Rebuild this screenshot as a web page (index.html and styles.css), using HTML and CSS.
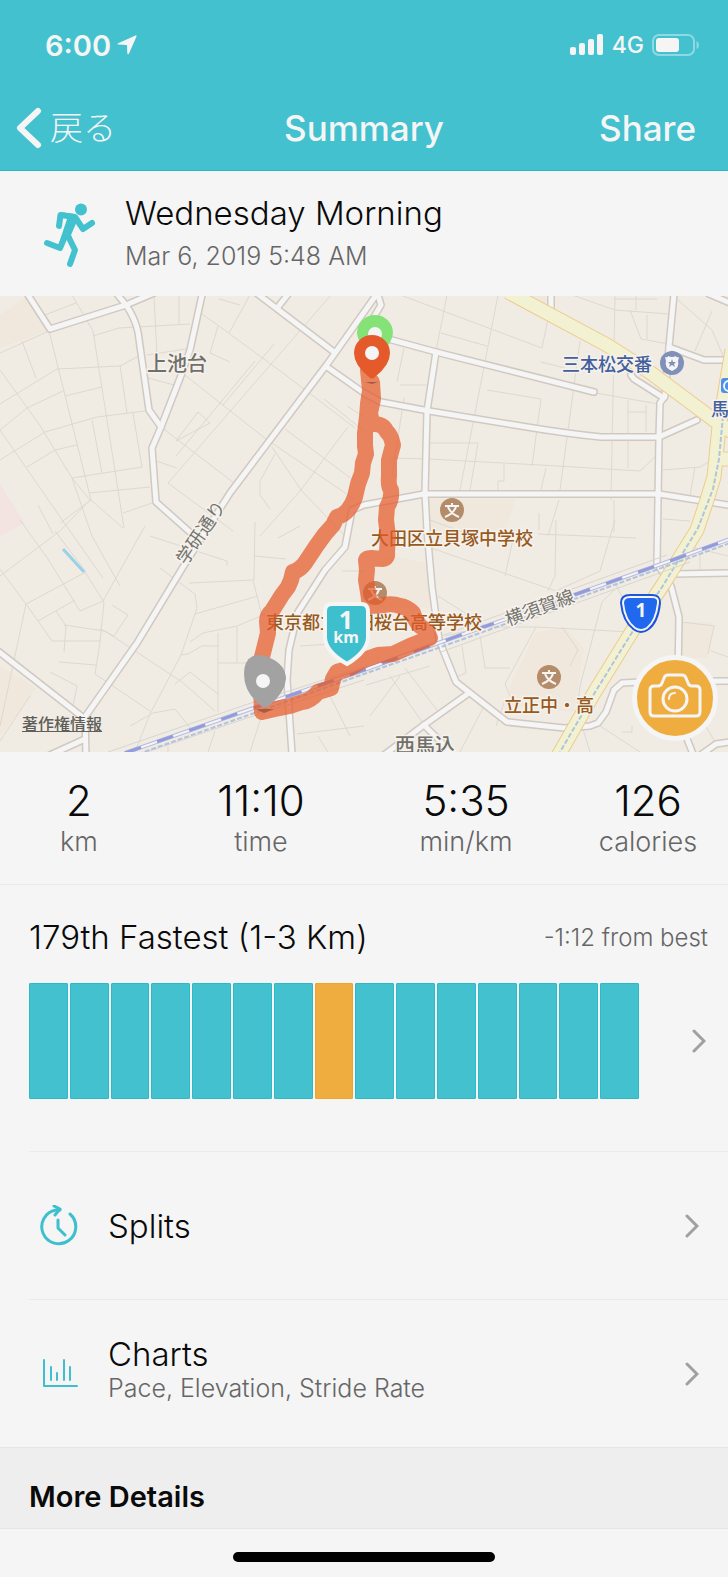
FILE: index.html
```html
<!doctype html>
<html lang="en">
<head>
  <meta charset="UTF-8">
  <meta name="viewport" content="width=device-width, initial-scale=1.0">
  <title>Summary</title>
  <link rel="stylesheet" href="styles.css">
</head>
<body>
  <header class="header">
    <div class="status">
      <span class="clock">6:00</span>
      <svg class="location" width="20" height="20" viewBox="0 0 20 20"><path d="M18.500 0.500 Q20 0 19.500 1.500 L12 18.500 Q11 20 10.300 18.500 L10 10.500 Q10 10 9.500 10 L1.200 9.600 Q-0.500 9 1.200 8.200 Z"/></svg>
      <svg class="signal" width="34" height="22" viewBox="0 0 34 22"><rect y="13" width="6" height="8" rx="2"/><rect x="9" y="9" width="6" height="12" rx="2"/><rect x="18" y="5" width="6" height="16" rx="2"/><rect x="27" y="0" width="6" height="21" rx="2"/></svg>
      <span class="network">4G</span>
      <svg class="battery" width="48" height="22" viewBox="0 0 48 22"><rect class="shell" x="1" y="1" width="41" height="20" rx="6"/><rect x="4" y="4" width="23" height="14" rx="3"/><path class="nub" d="M44.500 7 Q47 8 47 11 T44.500 15 Z"/></svg>
    </div>
    <nav class="nav">
      <a class="back" href="#">
        <svg width="26" height="42" viewBox="0 0 26 42"><path d="M22 4 L4 21 L22 38"/></svg>
        <span>戻る</span>
      </a>
      <h1>Summary</h1>
      <button class="share" type="button">Share</button>
    </nav>
  </header>

  <main>
    <section class="activity">
      <svg class="runner" width="52" height="68" viewBox="0 0 52 68">
        <circle cx="37" cy="9.500" r="6"/>
        <path d="M16 12 L30 14 L34 19 L27 35 L30 44 L20 36 L17 47 L14 46 L23 19 Z"/>
        <path class="limb" d="M15 26 L16.500 15 L31 17 L39 29 L48 23"/>
        <path class="limb" d="M28 20 L16 48 L3 43"/>
        <path class="limb" d="M23 34 L31 50 L26 64"/>
      </svg>
      <div>
        <h2>Wednesday Morning</h2>
        <p>Mar 6, 2019 5:48 AM</p>
      </div>
    </section>

    <section class="map">
      <svg class="map-view" viewBox="0 0 728 456">
        <defs>
          <g id="roads">
            <path d="M28 -1 L50 33 L126 9 L154 -3"/>
            <path d="M117 -2 L126 9 Q135 22 138 36 L149 114 L161 131"/>
            <path d="M202 -1 L190 54 L182 77 L161 131 L152 152 L156 206 L192 238"/>
            <path d="M379 -5 L328 67 L230 197 L183 271 L137 347 L85 421 L86 460"/>
            <path d="M85 443 L50 459"/>
            <path d="M378 -1 L381 9 L371 26"/>
            <path d="M255 -4 L334 56"/>
            <path d="M289 -3 L278 11"/>
            <path d="M327 71 L364 97 L381 106 L429 115 L527 131 Q570 138 601 141 H659 L697 124"/>
            <path d="M364 36 L392 44 L436 56 L594 96"/>
            <path d="M436 56 L427 115 L425 197 L427 234 L432 291 L439 344 L456 386 L507 426 L564 432 L590 430 L598 427 L606 416 L614 394 L622 387 L641 386 L732 385"/>
            <path d="M469 397 L424 429 L384 459"/>
            <path d="M424 429 L453 458"/>
            <path d="M292 458 L287 384 L289 354 L298 316 L325 274 L345 251 L352 214 L364 209 L424 198 H659 L728 209"/>
            <path d="M674 -2 L669 51 L665 100 L660 107 L659 141 L657 267 L671 290 L679 321 L678 380 L680 425 L693 458"/>
            <path d="M669 51 L704 64 H726"/>
            <path d="M709 -2 L730 7"/>
            <path d="M551 -2 V17"/>
            <path d="M631 79 L634 83 L664 102"/>
            <path d="M674 278 L730 277"/>
            <path d="M702 458 L716 448 L730 446"/>
            <path d="M-2 355 L85 423"/>
          </g>
          <g id="highways">
            <path d="M508 -4 L607 49 L651 77 L714 124 L732 136"/>
            <path d="M732 54 L719 131 L714 181 L707 204 L697 234 L664 287 L631 337 L594 397 L558 460"/>
            <path d="M719 163 H732"/>
          </g>
          <g id="school">
            <circle r="12"/>
            <path d="M0 -7 V-4 M-7 -4 H7 M-4 -3 Q-1 4 7 7 M4 -3 Q1 4 -7 7"/>
          </g>
        </defs>

        <rect class="land" width="728" height="456"/>
        <g class="zone">
          <path d="M0 19 L26 1 L50 34 L0 52 Z"/>
          <path d="M0 370 L36 392 L12 425 L0 440 Z"/>
          <path d="M429 203 H515 L506 235 H432 Z"/>
          <path d="M392 260 L432 268 L434 312 H375 V270 Z"/>
          <path d="M505 410 L510 390 L535 337 L565 331 L584 352 L574 416 Z"/>
          <path d="M682 326 H713 L708 362 H682 Z"/>
          <path d="M527 0 H546 V15 Z"/>
        </g>
        <path class="zone-pink" d="M0 188 L25 227 L0 240 Z"/>
        <path class="zone-blue" d="M725 65 H728 V127 H718 Z"/>

        <g class="lanes">
          <path d="M0 57 L49 35 L91 204 L123 232 M0 74 L39 128 L72 182 L92 240 L120 290 M0 108 L57 73 L120 70 L137 61 M22 45 L36 82 M0 134 L27 112 L63 95 M65 100 L102 91 M0 164 L45 136 L97 121 L145 115"/>
          <path d="M72 -1 L93 35 L124 232 M93 40 L119 32 L190 28 M45 19 L76 7 M120 69 L127 117 M133 117 L142 171 L72 182 M92 124 L102 177 M27 171 L55 154 L77 149 M89 197 L150 191 M154 0 L157 60 M179 0 V28 M147 59 L186 53 M148 82 L174 89 M0 134 L65 228 L103 282"/>
          <path d="M72 182 L90 204 L60 235 L0 280 M91 204 L60 227 M123 217 L155 206 M38 209 L53 238 M202 18 L219 30 L283 77 L355 132 M219 3 L240 9 M250 -1 L229 37 M218 30 L210 57 L230 66 M274 48 L223 109 M255 65 L176 160 M186 80 L266 143 L354 203 M331 -1 L168 187 L233 235 M161 131 L234 187"/>
          <path d="M210 127 L176 145 L198 116 L210 127 M285 133 L353 184 M348 131 L335 148 L301 194 L260 240 M272 151 L301 194 L345 240 M275 158 L260 185 V199 L270 213 M156 165 L177 172 M324 103 L364 135 M347 110 L364 121"/>
          <path d="M20 224 L48 263 L80 315 L103 305 L145 230 M0 273 L26 308 L52 345 H100 M26 308 L86 276 L55 235 M85 276 L104 306 L100 346 L95 378 L150 415 M38 325 L75 304 M56 315 L66 330 L64 356 M64 329 L105 335 L182 386 L215 415 M59 366 L96 369 M112 309 L128 319 L114 340 L100 333 M50 376 L77 390 L72 415 M0 430 L26 308"/>
          <path d="M160 272 L195 298 L197 312 L181 359 L150 418 L135 456 M195 318 L258 300 M189 287 L253 284 L262 320 M227 265 V270 M150 240 L227 265 M254 284 L255 226 M255 260 L286 263 M278 242 L300 230 M181 359 L188 358 L202 350 H218 M190 346 L203 337 L237 330 L266 318 M218 337 V416 M237 331 V367 M218 367 H265 M175 388 L190 376 L218 398 M130 430 L153 417 L175 413 L192 434 M215 435 L208 456 M168 450 V456 M300 350 L330 348 M342 275 H364"/>
          <path d="M265 409 L250 456 M297 438 L364 430 M318 440 L328 456 M330 400 L350 440 M0 445 L30 400"/>
          <path d="M403 0 L542 52 M447 -1 L436 55 M498 -1 L460 194 M542 52 L553 -1 M441 37 L487 50 M541 66 L565 72 M580 45 L560 194 M615 0 L611 204 M400 89 H427 M404 52 L397 86 M487 94 L541 103 L532 170 M404 102 L392 180 M429 147 H478 M478 147 L470 194 M390 162 L429 163 L540 169 L640 175 L656 160 M504 168 V185 H498 V194 M546 172 L541 194 M572 -1 L615 14 L669 18 M636 0 V14 M614 3 H657 M630 14 L641 43 L669 48 M647 19 V43 M628 104 V172 M628 116 H647 M646 109 V136 M596 97 L664 109"/>
          <path d="M678 4 L712 34 L724 62 M712 15 L695 55 M663 174 L700 171 L710 165 M695 171 L690 200 M663 223 L690 225 M614 204 V236 M559 204 L548 240 M539 217 V234 M430 224 L468 238"/>
          <path d="M431 252 L556 295 M556 224 L555 280 L548 295 M515 234 L505 280 M538 238 L636 242 M615 224 L600 275 L556 295 M438 300 L486 330 M445 340 L483 331 L536 331 L631 336 M480 340 L485 372 H510 M462 350 L466 377 L450 384 M614 285 L629 315 M615 293 L602 306 L580 390 L577 414 M536 331 L505 388 L510 400 M562 331 L578 354 L570 370 M484 410 L460 456 M505 404 L496 430 M390 380 L432 440 M366 389 L430 370 M405 372 L440 418 M370 420 L400 380 M600 430 L640 456 M622 436 H632 V430 M582 430 L590 456"/>
          <path d="M681 326 L715 330 M714 330 L708 358 M711 355 L728 361 M687 250 L728 260 M700 260 V277 M700 385 V420 L715 446"/>
        </g>

        <path class="stream" d="M63 253 L84 276"/>
        <use href="#roads" class="road-edge"/>
        <use href="#roads" class="road-fill"/>
        <use href="#highways" class="highway-edge"/>
        <use href="#highways" class="highway-fill"/>
        <path class="subway" d="M723 120 L719 163 L713 193 L698 232 L664 288 L631 338 L594 398 L560 456"/>

        <path class="rail-side" d="M108 456 L245 409 L364 371 M135 460 L250 421 L364 384 M441 340 L667 259 M441 356 L690 266"/>
        <path class="rail-edge" d="M125 457 L245 415 L364 374 L441 346 L667 266 L730 243"/>
        <path class="rail-fill" d="M125 457 L245 415 L364 374 L441 346 L667 266 L730 243"/>
        <path class="rail-dash" d="M125 457 L245 415 L364 374 L441 346 L667 266 L730 243"/>
        <path class="subway" d="M138 458 L246 420 L364 378 L441 351 L667 270 L730 247"/>

        <use href="#school" class="school" x="452" y="214"/>
        <use href="#school" class="school" x="375" y="297"/>
        <use href="#school" class="school" x="549" y="381"/>

        <g class="label-school">
          <text x="371" y="249">大田区立貝塚中学校</text>
          <text x="266" y="333">東京都立大田桜台高等学校</text>
          <text x="504" y="416">立正中・高</text>
        </g>
        <g class="label-area">
          <text x="147" y="75">上池台</text>
          <text x="395" y="457">西馬込</text>
        </g>
        <g class="label-blue">
          <text x="562" y="75">三本松交番</text>
          <text x="711" y="120">馬</text>
        </g>
        <g class="label-road">
          <text transform="translate(186 270) rotate(-56)">学研通り</text>
          <text transform="translate(508 330) rotate(-20)">横須賀線</text>
        </g>

        <circle class="police" cx="672" cy="67" r="12"/>
        <path class="police-badge" d="M665 61 Q668 62 668 60 Q672 62 676 60 Q676 62 679 61 L678 65 Q680 72 672 75 Q664 72 666 65 Z"/>
        <path class="police" d="M672 63 L673 66 H676 L674 68 L675 71 L672 69 L669 71 L670 68 L668 66 H671 Z"/>
        <rect class="station" x="721" y="82" width="14" height="15" rx="3"/>
        <circle class="station-ring" cx="729" cy="90" r="5"/>

        <path class="route-edge" d="M630 298 H652 Q661 298 661 307 Q659 327 649 334 Q641 340 633 334 Q622 326 620 307 Q620 298 630 298 Z"/>
        <path class="route-line" d="M630 301 H652 Q659 301 658 307 Q656 325 647 332 Q641 336 635 332 Q625 325 623 307 Q623 301 630 301 Z"/>
        <text class="route-number" x="641" y="321">1</text>

        <path class="track" d="M368 74 L370 94 L368 108 L367 121 L366 129 L365 137 L365 150 L366 158 L363 167 L362 177 L358 188 L355 201 L352 208 L348 214 Q344 219 337 221 L333 229 L325 238 L317 249 L311 258 L305 267 Q300 274 293 276 L291 284 L288 291 L282 299 L277 307 L272 315 Q267 319 267 325 L268 337 L265 349 L262 361 L261 391 L262 416 L275 413 L290 410 L302 406 Q311 405 318 396 L331 392 L333 383 L337 376 L350 372 L364 364 L378 359 L393 358 L410 350 L430 342 Q428 335 420 330 Q415 325 413 317 Q407 311 400 310 Q392 307 384 309 L370 310 L368 296 L366 284 L367 274 L366 264 Q367 262 371 262 L383 263 Q388 262 387 256 L388 240 L386 224 L387 211 Q392 204 391 194 Q388 190 389 180 L389 164 L393 149 Q391 139 387 136 Q384 130 380 129 L372 127 L370 117 L373 103 L372 86"/>

        <path class="pin-shadow" d="M365 86 H378 L372 88 Z M256 413 H274 L264 417 Z"/>
        <path class="pin-start" d="M375 19 A18 18 0 0 1 393 37 Q392 49 375 63 Q358 49 357 37 A18 18 0 0 1 375 19 Z"/>
        <circle class="pin-hole" cx="375" cy="38" r="7"/>
        <path class="pin-end" d="M372 39 A18 18 0 0 1 390 57 Q390 69 375 81 Q372 84 369 81 Q354 69 354 57 A18 18 0 0 1 372 39 Z"/>
        <circle class="pin-hole" cx="372" cy="57" r="7"/>
        <path class="pin-pause" d="M253 360 Q262 357 270 362 Q286 369 286 383 Q285 396 270 409 Q264 414 260 409 Q244 396 244 378 Q244 364 253 360 Z"/>
        <circle class="pin-hole" cx="263" cy="385" r="7"/>
        <path class="flag" d="M332 308 H361 Q368 308 368 315 V342 Q367 356 347 368 Q326 356 325 342 V315 Q325 308 332 308 Z"/>
        <text class="flag-number" x="346" y="333">1</text>
        <text class="flag-unit" x="346" y="347">km</text>
      </svg>
      <a class="copyright" href="#">著作権情報</a>
      <button class="camera" type="button" aria-label="Add photo">
        <svg width="52" height="44" viewBox="0 0 52 44">
          <path d="M5 12 H9 Q12 12 13 9 L15 4 Q16 1 19 1 H33 Q36 1 37 4 L39 9 Q40 12 43 12 H47 Q51 12 51 16 V38 Q51 42 47 42 H5 Q1 42 1 38 V16 Q1 12 5 12 Z"/>
          <circle cx="26" cy="25" r="12"/>
          <path class="glint" d="M20 25 Q20 19 26 19"/>
        </svg>
      </button>
    </section>

    <dl class="stats">
      <div><dd>2</dd><dt>km</dt></div>
      <div><dd>11:10</dd><dt>time</dt></div>
      <div><dd>5:35</dd><dt>min/km</dt></div>
      <div><dd>126</dd><dt>calories</dt></div>
    </dl>

    <section class="ranking">
      <div class="ranking-head">
        <h2>179th Fastest (1-3 Km)</h2>
        <span>-1:12 from best</span>
      </div>
      <a class="ranking-body" href="#" aria-label="All rankings">
        <span class="bars">
          <i></i><i></i><i></i><i></i><i></i><i></i><i></i><i class="current"></i><i></i><i></i><i></i><i></i><i></i><i></i><i></i>
        </span>
        <svg class="chevron" width="14" height="24" viewBox="0 0 14 24"><path d="M2 2 L12 12 L2 22"/></svg>
      </a>
    </section>

    <a class="row" href="#">
      <svg class="row-icon" width="40" height="42" viewBox="0 0 40 42">
        <path d="M32 9 A17 17 0 1 1 18 5 L22 5"/>
        <path d="M16 1 L22 4 L17 10 M20 15 V23 L27 30"/>
      </svg>
      <span class="row-text">Splits</span>
      <svg class="chevron" width="14" height="24" viewBox="0 0 14 24"><path d="M2 2 L12 12 L2 22"/></svg>
    </a>
    <a class="row" href="#">
      <svg class="row-icon thin" width="40" height="42" viewBox="0 0 40 42">
        <path d="M6 7 V33 H39 M13 14 V27 M19 20 V27 M26 7 V27 M32 14 V27"/>
      </svg>
      <span class="row-text with-note">Charts<small>Pace, Elevation, Stride Rate</small></span>
      <svg class="chevron" width="14" height="24" viewBox="0 0 14 24"><path d="M2 2 L12 12 L2 22"/></svg>
    </a>

    <h3 class="more">More Details</h3>
  </main>

  <footer class="home"><div class="home-bar"></div></footer>
</body>
</html>
```

FILE: styles.css
```css
* {
  box-sizing: border-box;
}

body {
  margin: 0;
  font-family: Inter, 'Noto Sans CJK JP', sans-serif;
  font-weight: 300;
  color: #0a0a0a;
  background-color: #f5f5f5;
}

h1, h2, h3, p, dl, dd {
  margin: 0;
  font-weight: inherit;
}

a {
  color: inherit;
  text-decoration: none;
}

button {
  font-family: inherit;
  border: none;
  padding: 0;
  cursor: pointer;
}

.header {
  height: 171px;
  background-color: #43c1cf;
  border-bottom: 1px solid #2bb5c4;
  color: #f5f5f5;
}

.status {
  display: flex;
  align-items: center;
  height: 90px;
  padding: 0 28px 0 45px;
  fill: #f5f5f5;
}

.clock {
  font-size: 29px;
  font-weight: 600;
}

.location {
  margin-left: 6px;
}

.signal {
  margin-left: auto;
}

.network {
  margin: 0 8px;
  font-size: 23px;
  font-weight: 500;
}

.battery .shell {
  fill: none;
  stroke: #8edae2;
  stroke-width: 2;
}

.battery .nub {
  fill: #8edae2;
}

.nav {
  display: grid;
  grid-template-columns: 1fr auto 1fr;
  align-items: center;
  height: 76px;
  padding: 0 32px 0 16px;
}

.back {
  display: flex;
  align-items: center;
  gap: 8px;
  font-size: 33px;
  line-height: 42px;
}

.back svg {
  fill: none;
  stroke: #f5f5f5;
  stroke-width: 6;
  stroke-linecap: round;
  stroke-linejoin: round;
}

.nav h1, .share {
  font-size: 35px;
  font-weight: 500;
}

.nav h1 {
  margin-left: 16px;
}

.share {
  justify-self: end;
  color: inherit;
  background: none;
}

.activity {
  display: flex;
  align-items: center;
  gap: 29px;
  height: 125px;
  padding: 0 44px;
}

.runner {
  fill: #43c1cf;
}

.runner .limb {
  fill: none;
  stroke: #43c1cf;
  stroke-width: 6;
  stroke-linecap: round;
  stroke-linejoin: round;
}

.activity h2, .ranking h2, .row-text {
  font-size: 33px;
  line-height: 44px;
}

.activity p {
  font-size: 25px;
  line-height: 42px;
  color: #666;
}

.map {
  position: relative;
  overflow: hidden;
}

.map-view {
  display: block;
  width: 100%;
  font-family: 'Noto Sans CJK JP', sans-serif;
}

.land { fill: #f0ece4; }
.zone { fill: #f0e8dc; }
.zone-pink { fill: #f3e4e1; }
.zone-blue { fill: #c5cde0; }

.lanes, .road-edge, .road-fill, .highway-edge, .highway-fill, .subway, .stream,
.rail-side, .rail-edge, .rail-fill, .rail-dash, .track {
  fill: none;
  stroke-linejoin: round;
}

.lanes { stroke: #dcd9d1; }
.stream { stroke: #98d2e6; stroke-width: 3; }
.road-edge { stroke: #d1c9c1; stroke-width: 8; stroke-linecap: round; }
.road-fill { stroke: #f5f5f5; stroke-width: 5; stroke-linecap: round; }
.highway-edge { stroke: #edcb8c; stroke-width: 15; }
.highway-fill { stroke: #f2f2d3; stroke-width: 13; }
.subway { stroke: #b3c3da; stroke-width: 2; stroke-dasharray: 5 2; }
.rail-side { stroke: #d8d5cf; }
.rail-edge { stroke: #b6bae0; stroke-width: 4; }
.rail-fill { stroke: #f5f5f5; stroke-width: 2; }
.rail-dash { stroke: #929bdc; stroke-width: 3; stroke-dasharray: 17 17; }

.school circle, .school { fill: #b48c69; }
.school { stroke: #f5f5f5; stroke-width: 2; }
#school circle { stroke: none; }
#school path { fill: none; }

.map-view text {
  stroke: #f5f2ed;
  stroke-width: 3;
  paint-order: stroke;
}

.label-school { font-size: 18px; font-weight: 500; fill: #98591c; }
.label-area { font-size: 20px; font-weight: 500; fill: #716f69; }
.label-blue { font-size: 18px; font-weight: 500; fill: #435f9d; }
.label-road { font-size: 18px; font-weight: 400; fill: #76746e; }

.police { fill: #8090b8; }
.police-badge { fill: #f5f5f5; }
.station { fill: #4a90ee; }
.station-ring { fill: none; stroke: #f5f5f5; stroke-width: 2; }

.route-edge { fill: #1b55dc; }
.route-line { fill: #2068ee; stroke: #f5f5f5; stroke-width: 2; }

.map-view .route-number, .map-view .flag-number, .map-view .flag-unit {
  font-family: 'Noto Sans', sans-serif;
  font-weight: 700;
  text-anchor: middle;
  fill: #f5f5f5;
  stroke: none;
}

.map-view .route-number { font-size: 19px; }
.map-view .flag-number { font-size: 25px; }
.map-view .flag-unit { font-size: 16px; }

.track {
  stroke: #e45a2a;
  stroke-opacity: 0.72;
  stroke-width: 16;
  stroke-linecap: round;
}

.pin-shadow { fill: #8c4b36; fill-opacity: 0.7; }
.pin-start { fill: #84e277; }
.pin-end { fill: #e45a2a; }
.pin-pause { fill: #a2a2a2; }
.pin-hole { fill: #f5f5f5; }
.flag { fill: #3dbfce; stroke: #f5f5f5; stroke-width: 4; }

.copyright {
  position: absolute;
  left: 22px;
  bottom: 16px;
  font-size: 16px;
  line-height: 24px;
  font-weight: 500;
  color: #605e59;
  text-decoration: underline;
}

.camera {
  position: absolute;
  right: 10px;
  bottom: 11px;
  display: flex;
  align-items: center;
  justify-content: center;
  width: 86px;
  height: 86px;
  border: 5px solid #f5f5f5;
  border-radius: 50%;
  background-color: #efad40;
}

.camera svg {
  margin-bottom: 4px;
  overflow: visible;
  fill: none;
  stroke: #f5f5f5;
  stroke-width: 3;
}

.camera .glint {
  stroke-width: 2;
  stroke-linecap: round;
}

.stats {
  display: grid;
  grid-template-columns: 158fr 206fr 204fr 160fr;
  height: 133px;
  padding-top: 24px;
  border-bottom: 1px solid #ebebeb;
  text-align: center;
}

.stats div {
  display: flex;
  flex-direction: column;
}

.stats dd {
  font-size: 42px;
  line-height: 50px;
}

.stats dt {
  font-size: 27px;
  line-height: 32px;
  color: #666;
}

.ranking {
  height: 266px;
  padding: 30px 20px 0 29px;
}

.ranking-head {
  display: flex;
  align-items: center;
  justify-content: space-between;
}

.ranking-head span {
  font-size: 24px;
  color: #666;
}

.ranking-body {
  display: flex;
  align-items: center;
  gap: 53px;
  margin-top: 24px;
  padding-right: 2px;
}

.bars {
  flex: 1;
  display: flex;
  gap: 2px;
  height: 116px;
}

.bars i {
  flex: 1;
  background-color: #43c1cf;
  border: 1px solid #2fb8c7;
  border-radius: 1px;
}

.bars .current {
  background-color: #efad40;
  border-color: #eea52c;
}

.chevron {
  flex: none;
  fill: none;
  stroke: #a0a0a0;
  stroke-width: 3;
  stroke-linecap: round;
}

.row {
  display: flex;
  align-items: center;
  height: 148px;
  margin-left: 29px;
  padding: 0 29px 0 9px;
  border-top: 1px solid #ebebeb;
}

.row-icon {
  fill: none;
  stroke: #3dbfce;
  stroke-width: 3;
  stroke-linecap: round;
  stroke-linejoin: round;
}

.row-icon.thin {
  stroke-width: 2;
}

.row-text {
  flex: 1;
  margin-left: 30px;
}

.with-note {
  padding-bottom: 16px;
}

.row-text small {
  display: block;
  font-size: 25px;
  line-height: 24px;
  color: #666;
}

.more {
  height: 82px;
  padding: 16px 29px 0;
  border-top: 1px solid #e6e6e6;
  border-bottom: 1px solid #e6e6e6;
  background-color: #eee;
  font-size: 29px;
  line-height: 66px;
  font-weight: 600;
}

.home {
  display: flex;
  justify-content: center;
  padding: 23px 0 15px;
}

.home-bar {
  width: 36%;
  height: 10px;
  border-radius: 5px;
  background-color: #000;
}
```
